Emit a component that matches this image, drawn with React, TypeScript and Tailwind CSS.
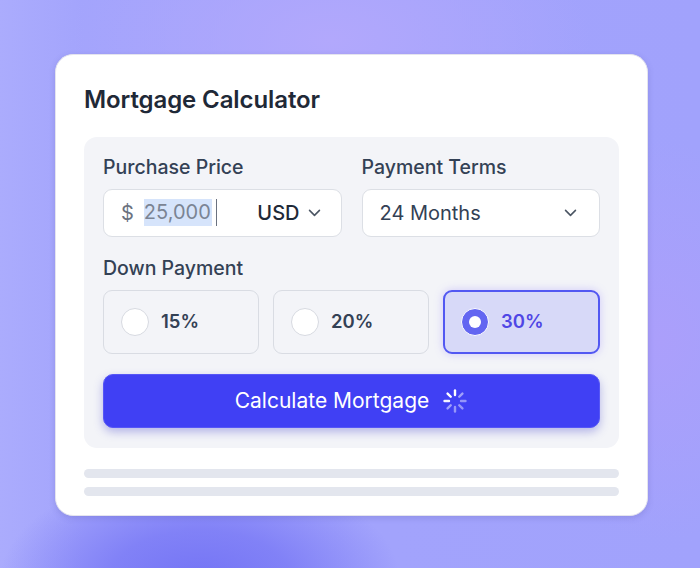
import React from "react";

function Chevron({ className }: { className?: string }) {
  return (
    <svg className={className} width="17" height="17" viewBox="0 0 24 24" fill="none" stroke="currentColor" strokeWidth="2.2" strokeLinecap="round" strokeLinejoin="round">
      <path d="M5 9l7 7 7-7" />
    </svg>
  );
}

function Spinner() {
  const ticks = [0, 45, 90, 135, 180, 225, 270, 315];
  const op = [1, 0.5, 0.45, 0.45, 0.45, 0.5, 0.95, 1];
  return (
    <svg width="26" height="26" viewBox="-13 -13 26 26">
      {ticks.map((a, i) => (
        <line
          key={a}
          x1="0"
          y1="-6"
          x2="0"
          y2="-10.5"
          stroke="white"
          strokeOpacity={op[i]}
          strokeWidth="2.4"
          strokeLinecap="round"
          transform={`rotate(${a})`}
        />
      ))}
    </svg>
  );
}

function Radio({ label, selected }: { label: string; selected?: boolean }) {
  return (
    <div
      className={
        selected
          ? "flex-1 h-[64px] rounded-[9px] border-2 border-[#5258f2] bg-[#d7d9f8] flex items-center pl-[16px] gap-[12px] shadow-[0_0_8px_rgba(140,120,255,0.35)]"
          : "flex-1 h-[64px] rounded-[9px] border-[1.5px] border-[#d9dce3] bg-[#f3f4f8] flex items-center pl-[17px] gap-[12px]"
      }
    >
      {selected ? (
        <div className="w-[28px] h-[28px] rounded-full bg-[#6366f1] border-[1.5px] border-white flex items-center justify-center">
          <div className="w-[12px] h-[12px] rounded-full bg-white" />
        </div>
      ) : (
        <div className="w-[28px] h-[28px] rounded-full bg-white border-[1.5px] border-[#d7dae1]" />
      )}
      <span className={selected ? "text-[18.5px] font-semibold text-[#4f46e5]" : "text-[18.5px] font-semibold text-[#334155]"}>
        {label}
      </span>
    </div>
  );
}

export default function App() {
  return (
    <div
      className="w-[700px] h-[568px] overflow-hidden pt-[54px] pl-[55px] bg-[#a3a4fc] bg-[radial-gradient(ellipse_200px_110px_at_200px_580px,#7474f5_0%,rgba(118,118,245,0.75)_45%,rgba(163,164,252,0)_100%),radial-gradient(ellipse_260px_140px_at_330px_40px,#b2a8fc_0%,rgba(178,168,252,0)_100%),radial-gradient(ellipse_160px_200px_at_660px_340px,#ab9ffb_0%,rgba(171,159,251,0)_100%),linear-gradient(90deg,#abacfd_0%,#a3a4fc_12%,#a1a2fc_100%)]"
      style={{ fontFamily: "Inter, 'Noto Sans', sans-serif" }}
    >
      <div className="w-[593px] h-[462px] bg-white rounded-[18px] border border-[#e4e4ee] shadow-[0_2px_6px_rgba(60,60,140,0.18)] px-[28px] pt-[29px]">
        <h1 className="text-[24px] leading-[32px] font-semibold text-[#1f2937] tracking-[-0.1px]">Mortgage Calculator</h1>
        <div className="mt-[21px] bg-[#f3f4f8] rounded-[13px] px-[19px] pt-[18px] pb-[20px]">
          <div className="flex gap-[20px]">
            <div className="flex-1">
              <div className="text-[19.5px] leading-[24px] font-medium text-[#334155]">Purchase Price</div>
              <div className="mt-[10px] h-[48px] bg-white rounded-[9px] border-[1.5px] border-[#dcdfe5] flex items-center pl-[17px] pr-[18px] pb-[1px]">
                <span className="text-[20px] text-[#6b7280]">$</span>
                <span className="ml-[10px] text-[20px] text-[#7b8494] bg-[#d6e4fb] leading-[27px] pr-[1px]">25,000</span>
                <span className="ml-[4px] w-[1.5px] h-[27px] bg-[#6b7280]" />
                <span className="ml-auto text-[20px] font-medium text-[#1f2937]">USD</span>
                <Chevron className="ml-[6px] text-[#4b5563]" />
              </div>
            </div>
            <div className="flex-1">
              <div className="text-[19.5px] leading-[24px] font-medium text-[#334155]">Payment Terms</div>
              <div className="mt-[10px] h-[48px] bg-white rounded-[9px] border-[1.5px] border-[#dcdfe5] flex items-center pl-[17px] pr-[20px] pb-[1px]">
                <span className="text-[20px] text-[#334155]">24 Months</span>
                <Chevron className="ml-auto text-[#4b5563]" />
              </div>
            </div>
          </div>
          <div className="mt-[19px] text-[19.5px] leading-[24px] font-medium text-[#334155]">Down Payment</div>
          <div className="mt-[10px] flex gap-[14px]">
            <Radio label="15%" />
            <Radio label="20%" />
            <Radio label="30%" selected />
          </div>
          <button className="mt-[20px] w-full h-[54px] rounded-[10px] bg-[#4040f4] border border-[#5656f6] shadow-[0_4px_10px_rgba(64,64,200,0.35)] flex items-center justify-center gap-[13px]">
            <span className="text-[21px] text-white">Calculate Mortgage</span>
            <Spinner />
          </button>
        </div>
        <div className="mt-[21px] h-[9px] rounded-full bg-[#e3e6ee]" />
        <div className="mt-[9px] h-[9px] rounded-full bg-[#e3e6ee]" />
      </div>
    </div>
  );
}
